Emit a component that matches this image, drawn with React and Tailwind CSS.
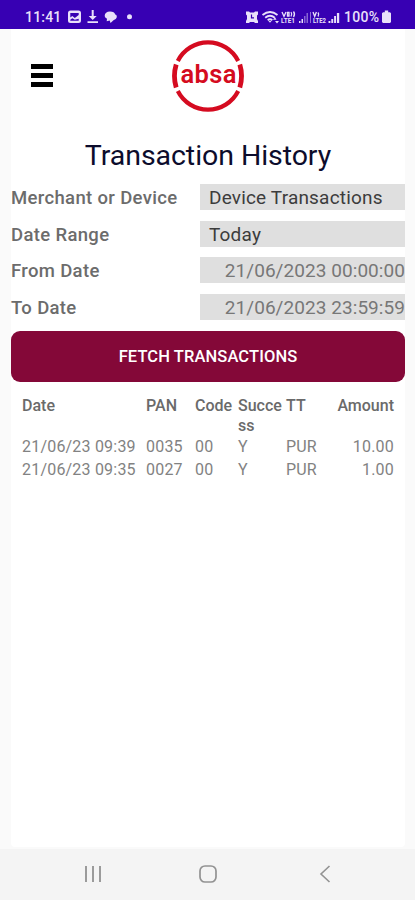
import React from 'react';

const FILTERS = [
  { label: 'Merchant or Device', value: 'Device Transactions', kind: 'select' },
  { label: 'Date Range', value: 'Today', kind: 'select' },
  { label: 'From Date', value: '21/06/2023 00:00:00', kind: 'date' },
  { label: 'To Date', value: '21/06/2023 23:59:59', kind: 'date' },
];

const TRANSACTIONS = [
  { date: '21/06/23 09:39', pan: '0035', code: '00', success: 'Y', tt: 'PUR', amount: '10.00' },
  { date: '21/06/23 09:35', pan: '0027', code: '00', success: 'Y', tt: 'PUR', amount: '1.00' },
];

const COLUMNS = 'grid grid-cols-[124px_49px_43px_48px_36px_1fr]';

/* ── Status bar ──────────────────────────────────────────────────────────── */
function StatusBar() {
  return (
    <div className="h-[29px] shrink-0 bg-[#3700b3] text-[#e9e0fa] flex items-center justify-between pl-[25px] pr-[24px] pt-1">
      <div className="flex items-center">
        <span className="text-[14px] font-medium leading-none w-[43px] tracking-[0.2px]">11:41</span>
        <svg width="66" height="16" viewBox="0 0 66 16" fill="currentColor">
          <path fillRule="evenodd" d="M2.500 1.500h8A2.500 2.500 0 0 1 13 4v7.500a2.500 2.500 0 0 1-2.500 2.500h-8A2.500 2.500 0 0 1 0 11.500V4A2.500 2.500 0 0 1 2.500 1.500zM2.300 4v4.500l2-1.500 2.500 2 3.900-3V4zM2.300 11.800h8.400v-2l-3.900 1-2.500-1.600-2 1.500z" />
          <path d="M23.700 1h2v6h3l-4 4-4-4h3zM19.500 12.300h10.500V14H19.500z" />
          <path d="M42 2.500c3 0 4.800 1.300 5.200 3 1.200.4 1.600 1.200 1.600 2.200 0 1.600-1.300 2.700-3 3.200L42.500 14l-.8-2.600-3 .8.300-2.500c-1.500-.7-2.300-1.700-2.300-2.900 0-2.600 2.100-4.300 5.300-4.300z" />
          <circle cx="61.500" cy="7.800" r="2.500" />
        </svg>
      </div>
      <div className="flex items-center">
        <svg width="97" height="16" viewBox="0 0 97 16" fill="currentColor">
          {/* alarm */}
          <path d="M0 2.500h3l1 1h4l1-1h3v3l-1 1v3.500l1 2v2H9l-1-1H4l-1 1H0v-2l1-2V6.500l-1-1z" />
          <path d="M5.500 5.500v3.300H8" fill="none" stroke="#3700b3" strokeWidth="1.200" />
          {/* wifi */}
          <g fill="none" stroke="currentColor" strokeWidth="1.800">
            <path d="M16.500 6q7.500-6 15 0M19.200 8.700q4.800-4 9.600 0M21.700 11.200q2.300-2 4.600 0" />
          </g>
          <path d="M22.500 12l1.500 1.800 1.500-1.800zM27 10.800l2-2.500 1.500 2.500zM29 12h4l-2 2.500z" />
          {/* volte + signal, first sim */}
          <path d="M36 3l2 4.500L40 3M43 3.500h-1.500v3.500H43zM45 3q1.500 2.200 0 4.500M47.500 2.500q2 2.700 0 5.500" fill="none" stroke="currentColor" strokeWidth="1.300" />
          <text x="35" y="14.200" fontSize="6.500" fontWeight="700" textLength="14" lengthAdjust="spacingAndGlyphs">LTE1</text>
          <path d="M53 12h1.500v2H53zM55.500 10H57v4h-1.500z" />
          <path opacity=".45" d="M58 7h1.500v7H58zM60.500 4H62v10h-1.500z" />
          {/* volte + signal, second sim */}
          <path opacity=".5" d="M64 3h1v11h-1z" />
          <path d="M67 3l1.700 4.500L70.400 3M72 3.500q1.500 2 0 4" fill="none" stroke="currentColor" strokeWidth="1.300" />
          <text x="67" y="14.200" fontSize="6.500" fontWeight="700" textLength="13" lengthAdjust="spacingAndGlyphs">LTE2</text>
          <path d="M82.500 12h1.900v2h-1.900zM85.300 10h1.900v4h-1.900zM88.100 7H90v7h-1.900zM90.900 4h2.300v10h-2.300z" />
        </svg>
        <span className="text-[14px] font-medium leading-none tracking-[0.3px] w-[38px] ml-[1px] whitespace-nowrap">100%</span>
        <svg width="9" height="14" viewBox="0 0 9 14" fill="currentColor">
          <path d="M2.800 0.500h3.400v1.700H8l1 1V12l-1 1H1l-1-1V3.200l1-1h1.800z" />
        </svg>
      </div>
    </div>
  );
}

/* ── Brand mark ──────────────────────────────────────────────────────────── */
function Logo() {
  return (
    <svg width="74" height="74" viewBox="-37 -37 74 74">
      <g fill="none" stroke="#d50b20" strokeWidth="4.200">
        <path d="M-30.200-15A33.800 33.800 0 0 1 30.200-15" />
        <path d="M-30.200 15A33.800 33.800 0 0 0 30.200 15" />
        <path d="M-31.800-11.500Q-35.300 0-31.800 11.500" strokeWidth="4.800" />
        <path d="M31.800-11.500Q35.300 0 31.800 11.500" strokeWidth="4.800" />
      </g>
      <text
        x="-27.500"
        y="7.300"
        fill="#d50b20"
        fontFamily="Roboto, sans-serif"
        fontSize="25.500"
        fontWeight="600"
        textLength="56"
        lengthAdjust="spacing"
      >
        absa
      </text>
    </svg>
  );
}

function Header() {
  return (
    <div className="h-[93px] shrink-0 grid grid-cols-3 items-center">
      <div className="flex flex-col gap-[3.500px] pl-[20px] w-[42px]">
        <div className="h-[5.500px] bg-black" />
        <div className="h-[5.500px] bg-black" />
        <div className="h-[5.500px] bg-black" />
      </div>
      <div className="flex justify-center">
        <Logo />
      </div>
    </div>
  );
}

function FilterRow({ label, value, kind }) {
  return (
    <div className="flex items-center justify-between">
      <span className="text-[18.500px] leading-[28px] -mb-[2px] font-medium text-[#6c6c6c] tracking-[0.340px]">{label}</span>
      {kind === 'date' ? (
        <div className="w-[205px] h-[26px] bg-[#dfdfdf] text-[#777] text-[19px] leading-[28px] tracking-[0.060px] text-right whitespace-nowrap">{value}</div>
      ) : (
        <div className="w-[205px] h-[26px] bg-[#dfdfdf] text-[#3c3c3c] text-[19px] leading-[28px] tracking-[0.180px] pl-[9px] whitespace-nowrap">{value}</div>
      )}
    </div>
  );
}

function TransactionTable() {
  return (
    <div className="px-[11px] mt-[14.500px] text-[16px] text-[#828282]">
      <div className={`${COLUMNS} text-[16px] leading-[19.500px] font-medium text-[#6a6a6a]`}>
        <span>Date</span>
        <span>PAN</span>
        <span>Code</span>
        <span>Succe<br />ss</span>
        <span>TT</span>
        <span className="text-right">Amount</span>
      </div>
      <div className="mt-[1px]">
        {TRANSACTIONS.map((t) => (
          <div key={t.date} className={`${COLUMNS} leading-[22.500px] tracking-[0.200px]`}>
            <span>{t.date}</span>
            <span>{t.pan}</span>
            <span>{t.code}</span>
            <span>{t.success}</span>
            <span>{t.tt}</span>
            <span className="text-right">{t.amount}</span>
          </div>
        ))}
      </div>
    </div>
  );
}

/* ── System navigation ───────────────────────────────────────────────────── */
function NavBar() {
  return (
    <div className="h-[51px] shrink-0 bg-[#f4f4f4] flex items-center justify-between pl-[84px] pr-[83px] pb-[2px] text-[#929292]">
      <svg width="18" height="18" viewBox="0 0 18 18" fill="none" stroke="currentColor" strokeWidth="1.800">
        <path d="M2 1v16M9 1v16M16 1v16" />
      </svg>
      <svg width="18" height="18" viewBox="0 0 18 18" fill="none" stroke="currentColor" strokeWidth="1.700">
        <rect x="1" y="1" width="16" height="16" rx="5" />
      </svg>
      <svg width="18" height="18" viewBox="0 0 18 18" fill="none" stroke="currentColor" strokeWidth="1.600">
        <path d="M15.500 1L7 9l8.500 8" />
      </svg>
    </div>
  );
}

export default function App() {
  return (
    <div className="w-[415px] h-[900px] flex flex-col overflow-hidden bg-[#fafafa] font-[Roboto,sans-serif]">
      <StatusBar />
      <div className="flex-1 min-h-0 ml-[11px] mr-[10px] mb-[2px] bg-white flex flex-col rounded-b-[4px]">
        <Header />
        <h1 className="mt-[17px] text-center text-[28.500px] leading-[34px] -tracking-[0.060px] text-[#0c0c2c]">Transaction History</h1>
        <div className="mt-[11px] flex flex-col gap-[10.500px]">
          {FILTERS.map((f) => (
            <FilterRow key={f.label} {...f} />
          ))}
        </div>
        <button className="mt-[11px] pt-[2px] h-[51px] w-full shrink-0 rounded-[9px] bg-[#840838] text-white text-[16.500px] tracking-[0.100px] font-medium">
          FETCH TRANSACTIONS
        </button>
        <TransactionTable />
      </div>
      <NavBar />
    </div>
  );
}
